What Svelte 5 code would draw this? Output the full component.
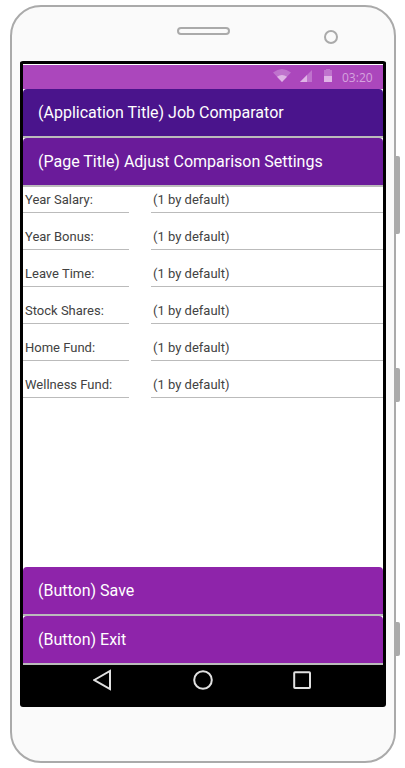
<script>
  const fields = ['Year Salary:', 'Year Bonus:', 'Leave Time:', 'Stock Shares:', 'Home Fund:', 'Wellness Fund:'];
</script>

<div class="stage">
  <div class="side volume"></div>
  <div class="side power"></div>
  <div class="side extra"></div>
  <main class="phone">
    <div class="speaker"></div>
    <div class="camera"></div>
    <div class="screen">
      <div class="status">
        <svg class="wifi" width="18" height="13" viewBox="0 0 18 13">
          <path d="M0 3.5Q9-3.5 18 3.5L9 13Z" fill="#bf73cd" />
          <path d="M4 7.7Q9 4.3 14 7.7L9 13Z" fill="#dfb4e6" />
        </svg>
        <svg class="signal" width="12" height="12" viewBox="0 0 12 12">
          <path d="M0 12L12 0V12Z" fill="#bf73cd" />
          <path d="M0 12L7 5V12Z" fill="#dfb4e6" />
        </svg>
        <svg class="battery" width="8" height="13" viewBox="0 0 8 13">
          <path d="M0 1H2V0H6V1H8V7H0Z" fill="#bf73cd" />
          <path d="M0 7H8V13H0Z" fill="#dfb4e6" />
        </svg>
        <span class="time">03:20</span>
      </div>
      <header class="bar app">(Application Title) Job Comparator</header>
      <h1 class="bar page">(Page Title) Adjust Comparison Settings</h1>
      <section class="form">
        {#each fields as label}
          <div class="row">
            <span class="cell label">{label}</span>
            <span class="cell value">(1 by default)</span>
          </div>
        {/each}
      </section>
      <button class="bar action">(Button) Save</button>
      <button class="bar action">(Button) Exit</button>
      <nav>
        <svg width="20" height="22" viewBox="0 0 20 22"><path d="M1.3 11L17 1.9V20.1Z" /></svg>
        <svg width="20" height="22" viewBox="0 0 20 22"><circle cx="10" cy="11" r="8.8" /></svg>
        <svg width="20" height="22" viewBox="0 0 20 22"><rect x="1.2" y="3.2" width="15.8" height="15.8" rx="0.8" /></svg>
      </nav>
    </div>
  </main>
</div>

<style>
  :global(body) { margin: 0; background: #fff; }
  .stage {
    position: relative;
    box-sizing: border-box;
    width: 405px;
    height: 768px;
    padding: 5px 0 0 10px;
    overflow: hidden;
    font-family: Roboto, sans-serif;
  }
  .phone {
    position: relative;
    box-sizing: border-box;
    width: 386px;
    height: 758px;
    padding: 54px 8px 0;
    border: 2px solid #aaa;
    border-radius: 31px;
    background: #fafafa;
  }
  .side {
    position: absolute;
    left: 394px;
    width: 6px;
    height: 34px;
    border-radius: 0 2px 2px 0;
    background: #aaa;
  }
  .volume { top: 156px; height: 78px; }
  .power { top: 368px; }
  .extra { top: 622px; }
  .speaker {
    position: absolute;
    left: 165px;
    top: 20px;
    box-sizing: border-box;
    width: 53px;
    height: 8px;
    border: 2px solid #aaa;
    border-radius: 4px;
  }
  .camera {
    position: absolute;
    left: 312px;
    top: 23px;
    box-sizing: border-box;
    width: 14px;
    height: 14px;
    border: 2px solid #aaa;
    border-radius: 50%;
  }
  .screen {
    display: flex;
    flex-direction: column;
    box-sizing: border-box;
    width: 366px;
    height: 646px;
    padding-top: 1px;
    border: 3px solid #000;
    border-bottom-width: 0;
    border-radius: 3px;
    background: #fff;
  }
  .status {
    display: flex;
    align-items: flex-start;
    box-sizing: border-box;
    height: 24px;
    padding-left: 250px;
    background: #ab47bc;
  }
  .wifi { margin-top: 4px; }
  .signal { margin: 5px 0 0 9px; }
  .battery { margin: 4px 0 0 12px; }
  .time {
    margin-left: 10px;
    font: 12px/25px "Open Sans", sans-serif;
    color: #d5a3de;
  }
  .bar {
    box-sizing: border-box;
    flex: none;
    width: 100%;
    height: 49px;
    margin: 0;
    padding: 0 15px;
    border: 0;
    border-bottom: 2px solid #bbb;
    border-radius: 4px 4px 0 0;
    font: 400 16px/47px Roboto, sans-serif;
    text-align: left;
    color: #fff;
  }
  .app { background: #4a148c; }
  .page { background: #6a1b9a; }
  .action { background: #8e24aa; }
  .form { flex: 1; }
  .row { display: flex; justify-content: space-between; }
  .row + .row { margin-top: 11px; }
  .cell {
    box-sizing: border-box;
    height: 26px;
    padding-left: 2px;
    border-bottom: 1px solid #bbb;
    font-size: 13px;
    line-height: 25px;
    color: #424242;
  }
  .label { width: 106px; }
  .value { width: 232px; }
  nav {
    display: flex;
    justify-content: center;
    gap: 80px;
    box-sizing: border-box;
    height: 42px;
    padding-top: 4px;
    background: #000;
  }
  nav svg { fill: none; stroke: #e0e0e0; stroke-width: 2; }
</style>
